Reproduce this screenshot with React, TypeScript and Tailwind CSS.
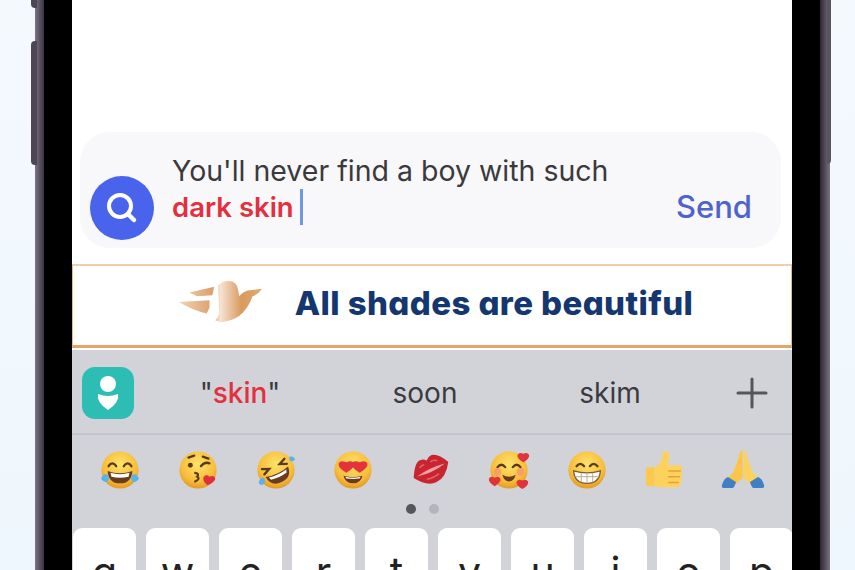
import React from "react";

const Face = ({ children, size = 42 }: { children?: React.ReactNode; size?: number }) => (
  <svg width={size} height={size} viewBox="0 0 44 44" className="shrink-0">
    <defs>
      <radialGradient id="fg" cx="50%" cy="35%" r="65%">
        <stop offset="0%" stopColor="#fde36a" />
        <stop offset="70%" stopColor="#f8bd3c" />
        <stop offset="100%" stopColor="#e39a24" />
      </radialGradient>
    </defs>
    <circle cx="22" cy="22" r="19.5" fill="url(#fg)" />
    {children}
  </svg>
);

const Eye = ({ d }: { d: string }) => <path d={d} fill="none" stroke="#5a3a1e" strokeWidth="2.4" strokeLinecap="round" />;

const Joy = () => (
  <Face>
    <Eye d="M10 18q4-6 8 0M26 18q4-6 8 0" />
    <path d="M9 23q13 5 26 0q-1 13-13 13T9 23z" fill="#6b3b1f" />
    <path d="M12 25q10 3 20 0l-1 4q-9 2-18 0z" fill="#fff" />
    <path d="M2 31q3-6 7-4q3 3 0 7q-4 2-7-3z" fill="#57b3ea" />
    <path d="M42 31q-3-6-7-4q-3 3 0 7q4 2 7-3z" fill="#57b3ea" />
  </Face>
);
const Kiss = () => (
  <Face>
    <circle cx="14" cy="17" r="2.6" fill="#5a3a1e" />
    <Eye d="M25 18q4-5 9-3M12 9l6-2M27 8l6 2" />
    <path d="M19 25q5 1 2 4q4 2-2 5" fill="none" stroke="#5a3a1e" strokeWidth="2.2" strokeLinecap="round" />
    <path d="M32 38q-6-5-4-9q3-3 6 0q4-2 6 1q1 4-8 8z" fill="#df2f3a" />
  </Face>
);
const Rofl = () => (
  <Face>
    <g transform="rotate(-25 22 22)">
      <Eye d="M9 15l7 3-7 3M35 15l-7 3 7 3" />
      <path d="M9 24q13 4 26 0q-1 12-13 12T9 24z" fill="#6b3b1f" />
      <path d="M12 26q10 2 20 0l-1 3q-9 2-18 0z" fill="#fff" />
    </g>
    <path d="M4 36q0-6 5-6q3 3 0 7q-3 2-5-1z" fill="#57b3ea" />
    <path d="M36 8q5-1 6 3q-2 3-6 1z" fill="#57b3ea" />
  </Face>
);
const Hearts = () => (
  <Face>
    <path d="M15 25q-9-5-8-10q2-4 8-1q6-3 8 1q1 5-8 10z" fill="#e5333b" />
    <path d="M29 25q-9-5-8-10q2-4 8-1q6-3 8 1q1 5-8 10z" fill="#e5333b" />
    <path d="M12 28q10 3 20 0q-2 8-10 8t-10-8z" fill="#6b3b1f" />
    <path d="M14 29q8 2 16 0l-1 2q-7 1-14 0z" fill="#fff" />
  </Face>
);
const Lips = () => (
  <svg width="42" height="42" viewBox="0 0 44 44" className="shrink-0">
    <g transform="rotate(-25 22 22)">
      <path d="M2 22q8-15 14-14q4 0 6 3q3-3 7-3q7 1 13 14q-9 14-20 14T2 22z" fill="#c9252e" />
      <path d="M6 22q16-3 32 0q-16 4-32 0z" fill="#f5a0a0" />
      <path d="M12 15q3-2 6-1M25 14q4-1 7 2M14 29q7 2 14 0" stroke="#e2636a" strokeWidth="1.5" fill="none" />
    </g>
  </svg>
);
const Heart = ({ x, y, r = 1 }: { x: number; y: number; r?: number }) => (
  <path transform={`translate(${x} ${y}) scale(${r})`} d="M0 6q-7-4-6-8q2-3 6-1q4-2 6 1q1 4-6 8z" fill="#e0343a" />
);
const Loved = () => (
  <Face>
    <Eye d="M10 19q4-5 8 0M26 19q4-5 8 0" />
    <circle cx="10" cy="24" r="4" fill="#f49272" opacity=".7" />
    <circle cx="34" cy="24" r="4" fill="#f49272" opacity=".7" />
    <path d="M15 27q7 4 14 0q-2 7-7 7t-7-7z" fill="#6b3b1f" />
    <Heart x={37} y={8} />
    <Heart x={7} y={33} />
    <Heart x={36} y={36} />
  </Face>
);
const Grin = () => (
  <Face>
    <Eye d="M11 18q4-5 8 0M25 18q4-5 8 0" />
    <path d="M8 23q14 4 28 0q-1 13-14 13T8 23z" fill="#fff" stroke="#7a5a30" strokeWidth="1.4" />
    <path d="M9 29h26M16 25v10M22 26v10M28 25v10" stroke="#b9a68c" strokeWidth="1" />
  </Face>
);
const Thumb = () => (
  <svg width="42" height="42" viewBox="0 0 44 44" className="shrink-0">
    <path d="M3 20q0-1 2-1h7v20H6q-3 0-3-2z" fill="#fbc94d" />
    <path d="M12 20q7-4 8-12q0-6 4-6q5 1 3 10l-1 5h12q4 1 3 5l-1 13q-1 5-5 5H18q-4 0-6-2z" fill="#fdd25c" />
    <path d="M27 23h12M27 29h11M27 35h10" stroke="#e5a133" strokeWidth="1.6" strokeLinecap="round" />
  </svg>
);
const Pray = () => (
  <svg width="44" height="44" viewBox="0 0 44 44" className="shrink-0">
    <path d="M21.5 2q-3 1-4 8l-5 14-8 8 9 5 8-7z" fill="#fbc548" />
    <path d="M22.5 2q3 1 4 8l5 14 8 8-9 5-8-7z" fill="#fdd25c" />
    <path d="M1 37q2-7 6-8l8 5q-1 4-3 6H3q-3 0-2-3z" fill="#3f7fc4" />
    <path d="M43 37q-2-7-6-8l-8 5q1 4 3 6h9q3 0 2-3z" fill="#3f7fc4" />
  </svg>
);

const Bird = () => (
  <svg width="88" height="44" viewBox="0 0 90 46" className="shrink-0">
    <defs>
      <linearGradient id="bg" x1="0" x2="1">
        <stop offset="0%" stopColor="#f3d3b4" />
        <stop offset="40%" stopColor="#dca06e" />
        <stop offset="50%" stopColor="#f6e3d2" />
        <stop offset="75%" stopColor="#d99a5f" />
        <stop offset="100%" stopColor="#e0aa72" />
      </linearGradient>
    </defs>
    <path d="M12 12l26-6-2 9-16 1zM1 22l32-2v8l-3 6q-14-3-29-12zM42 5q3-5 11-5 9 0 10 10l1 6q3-4 9-6l15-2q-4 6-10 8-3 9-10 17-8 9-23 10l-6-2q5-4 4-11z" fill="url(#bg)" />
  </svg>
);

const Key = ({ l }: { l: string }) => (
  <div className="flex h-[70px] w-[63px] shrink-0 justify-center rounded-[9px] bg-white pt-[17px] font-['Inter',sans-serif] text-[41px] leading-[54px] text-[#222]">
    {l}
  </div>
);

export default function App() {
  return (
    <div className="relative flex h-[570px] w-[855px] overflow-hidden bg-gradient-to-b from-[#f4f9fe] to-[#eef7fd] pl-[35px] font-['Inter',sans-serif]">
      {/* side buttons */}
      <div className="absolute left-[31px] top-[-20px] h-[28px] w-[6px] rounded-l-sm bg-[#4d4755]" />
      <div className="absolute left-[31px] top-[41px] h-[124px] w-[6px] rounded-l-sm bg-[#4d4755]" />
      <div className="absolute left-[827px] top-[-20px] h-[184px] w-[4px] rounded-r-sm bg-[#5a5460]" />

      <div className="flex h-full w-[795px] shrink-0">
        <div className="h-full w-[9px] shrink-0 bg-gradient-to-r from-[#7d7585] to-[#3a3340]" />
        <div className="flex h-full w-[776px] shrink-0 bg-black px-[28px]">
          <div className="flex h-full w-[720px] flex-col overflow-hidden bg-white">
            <div className="h-[132px] shrink-0" />

            {/* Input bubble */}
            <div className="ml-[8px] mr-[11px] flex h-[116px] shrink-0 rounded-[30px] bg-[#f8f7fa] pl-[10px] pr-[29px]">
              <div className="mt-[44px] flex h-[64px] w-[64px] shrink-0 items-center justify-center rounded-full bg-[#4a63ec]">
                <svg width="40" height="40" viewBox="0 0 40 40" fill="none" stroke="#fff" strokeLinecap="round">
                  <circle cx="18" cy="18" r="11" strokeWidth="4" />
                  <path d="M26 26l6 6" strokeWidth="4.5" />
                </svg>
              </div>
              <div className="ml-[18px] flex-1 pt-[21px] text-[28.5px] leading-[36px] text-[#3a3a3d]">
                <div>You'll never find a boy with such</div>
                <div className="flex items-center text-[27.5px] font-semibold text-[#e3303f]">
                  dark skin
                  <span className="ml-[6px] inline-block h-[36px] w-[3px] bg-[#6f97e0]" />
                </div>
              </div>
              <div className="self-end pb-[23px] text-[31px] font-medium leading-[36px] text-[#4d63d0]">Send</div>
            </div>

            <div className="h-[16px] shrink-0" />

            {/* Banner */}
            <div className="flex h-[84px] shrink-0 items-center justify-center gap-[30px] border-x border-t-2 border-b-[3px] border-x-[#e9b789] border-t-[#f0cfb0] border-b-[#e4a46c] pb-[5px] pl-[6px]">
              <Bird />
              <span className="font-['Inter',sans-serif] text-[33px] font-extrabold leading-none tracking-[0.4px] text-[#15376f] [font-feature-settings:'cv11']">All shades are beautiful</span>
            </div>

            {/* Keyboard */}
            <div className="mt-[2px] flex min-h-0 flex-1 flex-col overflow-hidden bg-[#d1d3d9]">
              <div className="flex h-[85px] shrink-0 items-center border-b-2 border-[#c4c6cd] pt-[2px] pl-[10px] pr-[24px] text-[28px] text-[#3b3b3e]">
                <div className="flex h-[52px] w-[52px] shrink-0 items-center justify-center rounded-[13px] bg-[#2dbdb5]">
                  <svg width="28" height="36" viewBox="0 0 28 36" fill="#fff">
                    <circle cx="14" cy="9" r="8" />
                    <path d="M4 19q10 4 20 0q2 8-10 16Q2 27 4 19z" />
                  </svg>
                </div>
                <div className="ml-[65px] w-[82px] whitespace-nowrap text-center">
                  "<span className="font-medium text-[#e3303f]">skin</span>"
                </div>
                <div className="ml-[109px] w-[70px] text-center">soon</div>
                <div className="ml-[117px] w-[66px] text-center">skim</div>
                <svg className="ml-auto" width="32" height="32" viewBox="0 0 32 32" stroke="#55555a" strokeWidth="3" strokeLinecap="round">
                  <path d="M16 2v28M2 16h28" />
                </svg>
              </div>

              <div className="flex shrink-0 items-center justify-between px-[27px] pt-[13px]">
                <Joy />
                <Kiss />
                <Rofl />
                <Hearts />
                <Lips />
                <Loved />
                <Grin />
                <Thumb />
                <Pray />
              </div>

              <div className="flex shrink-0 justify-center gap-[13px] pr-[19px] pt-[12px]">
                <span className="h-[10px] w-[10px] rounded-full bg-[#55565b]" />
                <span className="h-[10px] w-[10px] rounded-full bg-[#b2b5bb]" />
              </div>

              <div className="flex shrink-0 gap-[10px] pl-[1px] pt-[14px]">
                {["q", "w", "e", "r", "t", "y", "u", "i", "o", "p"].map((l) => (
                  <Key key={l} l={l} />
                ))}
              </div>
            </div>
          </div>
        </div>
        <div className="h-full w-[10px] shrink-0 bg-gradient-to-r from-[#2e2833] to-[#7a7280]" />
      </div>
    </div>
  );
}
